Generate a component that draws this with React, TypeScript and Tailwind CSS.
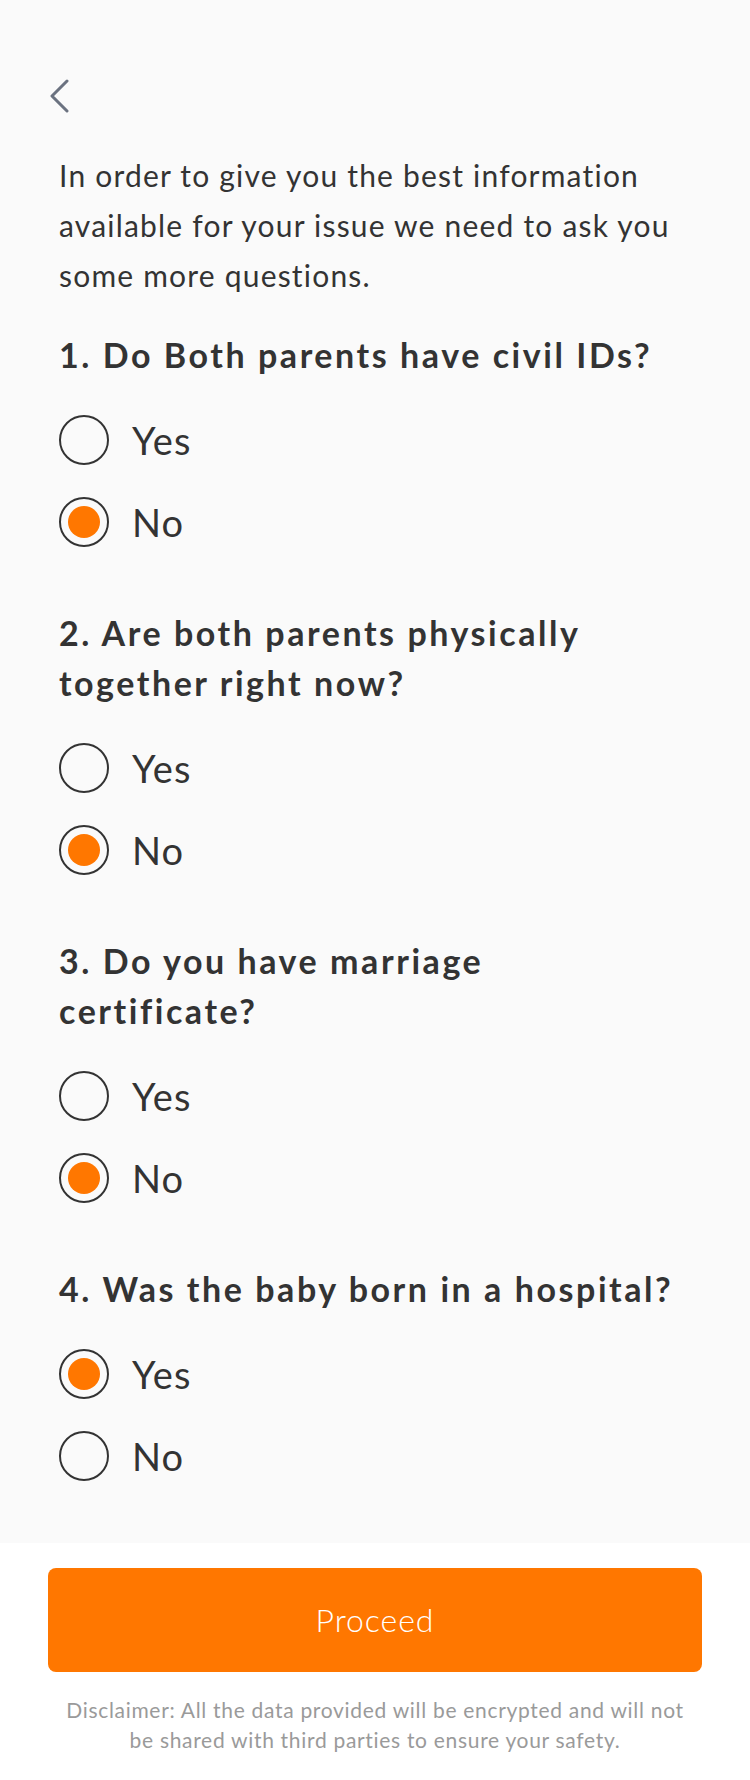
import { useState } from 'react';

type Answer = 'yes' | 'no';

interface Question {
  id: number;
  text: string;
}

const questions: Question[] = [
  { id: 1, text: '1. Do Both parents have civil IDs?' },
  { id: 2, text: '2. Are both parents physically together right now?' },
  { id: 3, text: '3. Do you have marriage certificate?' },
  { id: 4, text: '4. Was the baby born in a hospital?' },
];

function Radio({ checked, label, onClick }: { checked: boolean; label: string; onClick: () => void }) {
  return (
    <button type="button" onClick={onClick} className="flex items-center h-[50px] text-left">
      <span className="flex items-center justify-center w-[50px] h-[50px] rounded-full border-2 border-[#333333] shrink-0">
        {checked && <span className="w-[32px] h-[32px] rounded-full bg-[#ff7700]" />}
      </span>
      <span className="ml-[23px] text-[38px] leading-[50px] tracking-[0.03em] text-[#333333]">{label}</span>
    </button>
  );
}

export default function App() {
  const [answers, setAnswers] = useState<Record<number, Answer>>({
    1: 'no',
    2: 'no',
    3: 'no',
    4: 'yes',
  });

  return (
    <div className="w-[750px] min-h-[1780px] bg-white font-['Lato',sans-serif] text-[#333333]">
      <div className="bg-[#fafafa] pt-[79px] pb-[62px] pl-[59px] pr-[40px]">
        <button type="button" className="block -ml-[10px] w-[20px] h-[34px]">
          <svg width="20" height="34" viewBox="0 0 20 34" fill="none">
            <path d="M18 2 L3 17 L18 32" stroke="#6b7280" strokeWidth="3" strokeLinecap="round" strokeLinejoin="round" />
          </svg>
        </button>

        <p className="mt-[37px] text-[30px] leading-[50px] tracking-[0.04em] text-[#333333]">
          In order to give you the best information available for your issue we need to ask you some more questions.
        </p>

        <div className="mt-[30px] flex flex-col gap-[61px]">
          {questions.map((q) => (
            <div key={q.id}>
              <h2 className="text-[34px] leading-[50px] font-bold tracking-[0.075em] text-[#333333] pr-[20px]">
                {q.text}
              </h2>
              <div className="mt-[35px] flex flex-col gap-[32px]">
                <Radio
                  checked={answers[q.id] === 'yes'}
                  label="Yes"
                  onClick={() => setAnswers({ ...answers, [q.id]: 'yes' })}
                />
                <Radio
                  checked={answers[q.id] === 'no'}
                  label="No"
                  onClick={() => setAnswers({ ...answers, [q.id]: 'no' })}
                />
              </div>
            </div>
          ))}
        </div>
      </div>

      <div className="bg-white px-[48px] pt-[25px] pb-[30px]">
        <button
          type="button"
          className="flex items-center justify-center w-full h-[104px] rounded-[8px] bg-[#ff7700] text-white text-[32px] font-light tracking-[0.03em]"
        >
          Proceed
        </button>
        <p className="mt-[23px] px-[12px] text-center text-[21px] leading-[30px] tracking-[0.033em] text-[#9a9a9a]">
          Disclaimer: All the data provided will be encrypted and will not be shared with third parties to ensure your safety.
        </p>
      </div>
    </div>
  );
}
